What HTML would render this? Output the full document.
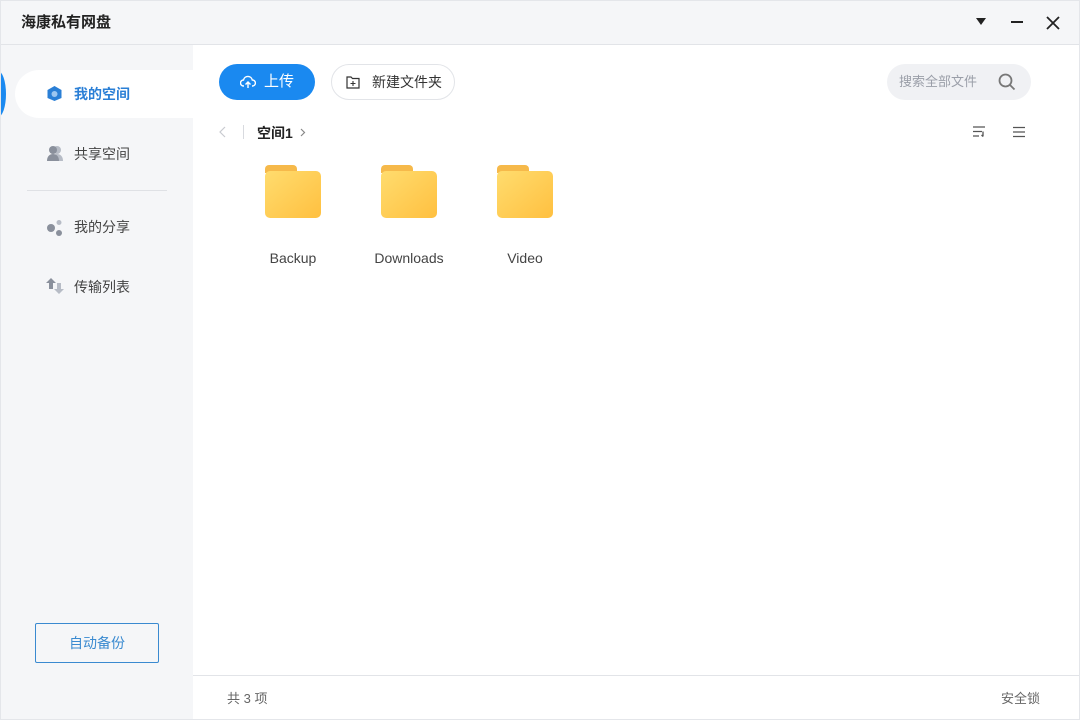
<!DOCTYPE html>
<html><head><meta charset="utf-8"><style>
*{margin:0;padding:0;box-sizing:border-box}
body{width:1080px;height:720px;overflow:hidden;font-family:"Liberation Sans","Noto Sans CJK SC",sans-serif;background:#fff;position:relative;color:#333}
.abs{position:absolute}
#top{left:0;top:0;width:1080px;height:45px;background:#f5f6f8;border-bottom:1px solid #e2e4e8}
#side{left:0;top:45px;width:193px;height:675px;background:#f5f6f8}
.nav{font-size:14px;color:#444}
</style></head><body>
<div id="top" class="abs">
<div class="abs" style="left:21px;top:11px;font-size:15px;font-weight:bold;color:#222">海康私有网盘</div>
<svg class="abs" style="left:975px;top:17px" width="12" height="10"><path d="M1 1h10L6 8z" fill="#222"/></svg>
<div class="abs" style="left:1011px;top:21px;width:12px;height:2px;background:#222"></div>
<svg class="abs" style="left:1046px;top:16px" width="14" height="14"><path d="M1 1L13 13M13 1L1 13" stroke="#222" stroke-width="1.8"/></svg>
</div>
<div id="side" class="abs">
<div class="abs" style="left:-10px;top:26px;width:16px;height:46px;border-radius:50%;background:#1a89f0"></div>
<div class="abs" style="left:15px;top:25px;width:180px;height:48px;background:#fff;border-radius:24px 0 0 24px"></div>
<svg class="abs" style="left:46px;top:40px" width="17" height="17"><path d="M8.5 1L15.5 5v8L8.5 16 1.5 13V5z" fill="#2a7fd6"/><circle cx="8.5" cy="9" r="3" fill="#9cc6f0"/></svg>
<div class="abs" style="left:74px;top:39px;font-size:14px;font-weight:bold;color:#2a7fd6">我的空间</div>
<svg class="abs" style="left:46px;top:100px" width="18" height="16"><circle cx="11" cy="5" r="4" fill="#b7bcc6"/><path d="M5 16c0-5 3-7 6-7s6 2 6 7z" fill="#b7bcc6"/><circle cx="7" cy="5" r="4" fill="#8a909c"/><path d="M1 16c0-5 3-7 6-7s6 2 6 7z" fill="#8a909c"/></svg>
<div class="abs nav" style="left:74px;top:99px">共享空间</div>
<div class="abs" style="left:27px;top:145px;width:140px;height:1px;background:#dfe1e5"></div>
<svg class="abs" style="left:46px;top:174px" width="18" height="18"><circle cx="5" cy="9" r="4" fill="#8a909c"/><circle cx="13" cy="3.5" r="2.5" fill="#b7bcc6"/><circle cx="13" cy="14" r="3" fill="#8a909c"/></svg>
<div class="abs nav" style="left:74px;top:172px">我的分享</div>
<svg class="abs" style="left:46px;top:232px" width="18" height="18"><path d="M5 1L10 6H7v6H3V6H0z" fill="#8a909c"/><path d="M13 17L8 12h3V6h4v6h3z" fill="#b7bcc6"/></svg>
<div class="abs nav" style="left:74px;top:232px">传输列表</div>
<div class="abs" style="left:35px;top:578px;width:124px;height:40px;border:1px solid #3a8ad0;border-radius:2px;color:#3a8ad0;font-size:14px;text-align:center;line-height:38px">自动备份</div>
</div>
<div class="abs" style="left:219px;top:64px;width:96px;height:36px;border-radius:18px;background:#1a89f0;color:#fff;font-size:15px;line-height:35px">
<svg class="abs" style="left:21px;top:11px" width="16" height="14"><path d="M4 11H3.5a3 3 0 010-6 4.5 4.5 0 018.8 0 3 3 0 01.2 6H12M8 13V7M5.5 9.5L8 7l2.5 2.5" fill="none" stroke="#fff" stroke-width="1.4"/></svg>
<span class="abs" style="left:45px">上传</span></div>
<div class="abs" style="left:331px;top:64px;width:124px;height:36px;border-radius:18px;border:1px solid #e2e4e8;font-size:14px;line-height:34px;color:#333">
<svg class="abs" style="left:14px;top:11px" width="14" height="13"><path d="M1 1h4l1.5 1.5H13V12H1z" fill="none" stroke="#333" stroke-width="1.2"/><path d="M7 5v5M4.5 7.5h5" stroke="#333" stroke-width="1.1"/></svg>
<span class="abs" style="left:40px">新建文件夹</span></div>
<div class="abs" style="left:887px;top:64px;width:144px;height:36px;border-radius:18px;background:#f0f1f4;font-size:13px;line-height:35px;color:#9a9ea8"><span class="abs" style="left:12px">搜索全部文件</span>
<svg class="abs" style="left:111px;top:9px" width="18" height="18"><circle cx="7.5" cy="7.5" r="6" fill="none" stroke="#777" stroke-width="1.8"/><path d="M12 12l4.5 4.5" stroke="#777" stroke-width="1.8"/></svg></div>
<svg class="abs" style="left:219px;top:126px" width="8" height="12"><path d="M6 1L1 6l5 5" fill="none" stroke="#c8cbd0" stroke-width="1.2"/></svg>
<div class="abs" style="left:243px;top:125px;width:1px;height:14px;background:#d8dadf"></div>
<div class="abs" style="left:257px;top:123px;font-size:14px;font-weight:bold;color:#222">空间1</div>
<svg class="abs" style="left:300px;top:128px" width="6" height="9"><path d="M1 1l3.5 3.5L1 8" fill="none" stroke="#888" stroke-width="1.2"/></svg>
<svg class="abs" style="left:972px;top:125px" width="14" height="13"><path d="M1 2h12M1 6.5h9M1 11h6M11 6.5v5M9.5 10l1.5 1.5" fill="none" stroke="#555" stroke-width="1.3"/></svg>
<svg class="abs" style="left:1013px;top:126px" width="12" height="12"><path d="M0 1.5h12M0 6h12M0 10.5h12" stroke="#555" stroke-width="1.3"/></svg>
<svg width="0" height="0" style="position:absolute"><defs><linearGradient id="g" x1="0" y1="0" x2="1" y2="1"><stop offset="0" stop-color="#ffdc6e"/><stop offset="1" stop-color="#ffc040"/></linearGradient></defs></svg>
<div class="abs" style="left:265px;top:165px"><svg width="56" height="53"><path d="M0 4a4 4 0 014-4h24a4 4 0 014 4v4H0z" fill="#f6b94a"/><rect x="0" y="6" width="56" height="47" rx="5" fill="url(#g)"/></svg></div>
<div class="abs" style="left:381px;top:165px"><svg width="56" height="53"><path d="M0 4a4 4 0 014-4h24a4 4 0 014 4v4H0z" fill="#f6b94a"/><rect x="0" y="6" width="56" height="47" rx="5" fill="url(#g)"/></svg></div>
<div class="abs" style="left:497px;top:165px"><svg width="56" height="53"><path d="M0 4a4 4 0 014-4h24a4 4 0 014 4v4H0z" fill="#f6b94a"/><rect x="0" y="6" width="56" height="47" rx="5" fill="url(#g)"/></svg></div>
<div class="abs" style="left:233px;top:250px;width:120px;text-align:center;font-size:14px;color:#444">Backup</div>
<div class="abs" style="left:349px;top:250px;width:120px;text-align:center;font-size:14px;color:#444">Downloads</div>
<div class="abs" style="left:465px;top:250px;width:120px;text-align:center;font-size:14px;color:#444">Video</div>
<div class="abs" style="left:193px;top:675px;width:887px;height:1px;background:#e2e4e8"></div>
<div class="abs" style="left:227px;top:688px;font-size:13px;color:#666">共 3 项</div>
<div class="abs" style="left:1001px;top:688px;font-size:13px;color:#666">安全锁</div>
<div class="abs" style="left:0;top:0;width:1080px;height:720px;border:1px solid #e4e6ea;pointer-events:none"></div>
</body></html>
